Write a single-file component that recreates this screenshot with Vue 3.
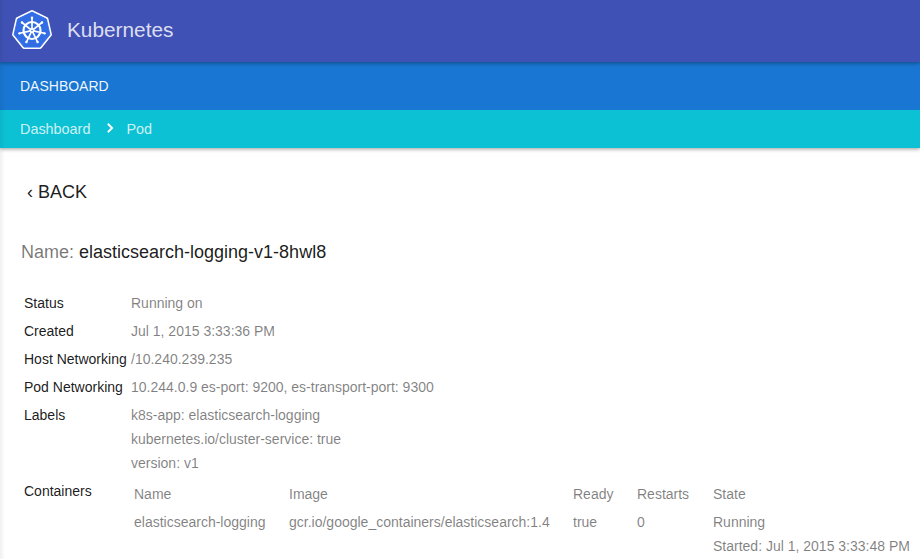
<script setup>
const point = (radius, step, count = 7) => {
  const a = (step / count) * Math.PI * 2 - Math.PI / 2
  return [radius * Math.cos(a), radius * Math.sin(a)].map((n) => +n.toFixed(2))
}
const heptagon = Array.from({ length: 7 }, (_, i) => point(18.4, i).join(',')).join(' ')
const spokes = Array.from({ length: 7 }, (_, i) => {
  const [x1, y1] = point(1.5, i)
  const [x2, y2] = point(13.6, i)
  const [cx, cy] = point(12.8, i)
  return { x1, y1, x2, y2, cx, cy }
})

const details = [
  { label: 'Status', lines: ['Running on'] },
  { label: 'Created', lines: ['Jul 1, 2015 3:33:36 PM'] },
  { label: 'Host Networking', lines: ['/10.240.239.235'] },
  { label: 'Pod Networking', lines: ['10.244.0.9 es-port: 9200, es-transport-port: 9300'] },
  {
    label: 'Labels',
    lines: ['k8s-app: elasticsearch-logging', 'kubernetes.io/cluster-service: true', 'version: v1'],
  },
]
const columns = ['Name', 'Image', 'Ready', 'Restarts', 'State']
const containers = [
  {
    name: 'elasticsearch-logging',
    image: 'gcr.io/google_containers/elasticsearch:1.4',
    ready: 'true',
    restarts: '0',
    state: ['Running', 'Started: Jul 1, 2015 3:33:48 PM'],
  },
]
</script>

<template>
  <div class="page">
    <header class="topbar">
      <svg class="logo" viewBox="-20 -20.5 40 41" width="40" height="41">
        <polygon class="shell" :points="heptagon" />
        <polygon class="face" :points="heptagon" />
        <circle class="rim" r="8.5" />
        <g v-for="(s, i) in spokes" :key="i">
          <line class="spoke" :x1="s.x1" :y1="s.y1" :x2="s.x2" :y2="s.y2" />
          <circle class="knob" :cx="s.cx" :cy="s.cy" r="1.2" />
        </g>
        <circle class="ring" r="2.4" />
        <circle class="hub" r="0.8" />
      </svg>
      <h1>Kubernetes</h1>
    </header>
    <nav class="tabs"><a>DASHBOARD</a></nav>
    <nav class="crumbs">
      <a>Dashboard</a>
      <svg class="chevron" width="8" height="12" viewBox="0 0 8 12"><path d="M1.8 1.8 L6.1 6 L1.8 10.2" /></svg>
      <a>Pod</a>
    </nav>
    <main>
      <a class="back">‹ BACK</a>
      <h2><span>Name:</span> elasticsearch-logging-v1-8hwl8</h2>
      <dl>
        <template v-for="d in details" :key="d.label">
          <dt>{{ d.label }}</dt>
          <dd><div v-for="line in d.lines" :key="line">{{ line }}</div></dd>
        </template>
        <dt>Containers</dt>
        <dd>
          <div class="containers">
            <span v-for="c in columns" :key="c">{{ c }}</span>
            <template v-for="c in containers" :key="c.name">
              <span>{{ c.name }}</span>
              <span>{{ c.image }}</span>
              <span>{{ c.ready }}</span>
              <span>{{ c.restarts }}</span>
              <span><div v-for="s in c.state" :key="s">{{ s }}</div></span>
            </template>
          </div>
        </dd>
      </dl>
    </main>
    <div class="edge"></div>
  </div>
</template>

<style>
body {
  margin: 0;
  overflow: hidden;
}
</style>

<style scoped>
.page {
  position: relative;
  display: flex;
  flex-direction: column;
  box-sizing: border-box;
  height: 559px;
  overflow: hidden;
  background: #fff;
  font: 14px/24px "Liberation Sans", Arial, sans-serif;
  color: rgba(0, 0, 0, 0.9);
}
.topbar {
  position: relative;
  z-index: 2;
  display: flex;
  align-items: center;
  flex: none;
  height: 62px;
  padding-left: 12px;
  box-sizing: border-box;
  background: #3f51b5;
  box-shadow: 0 1px 4px rgba(0, 0, 0, 0.4);
}
.logo {
  flex: none;
  margin-bottom: 1px;
}
.shell {
  fill: #fff;
  stroke: #fff;
  stroke-width: 4;
  stroke-linejoin: round;
}
.face {
  fill: #326de6;
  stroke: #326de6;
  stroke-width: 0.9;
  stroke-linejoin: round;
}
.rim {
  fill: none;
  stroke: #fff;
  stroke-width: 2.2;
}
.spoke {
  stroke: #fff;
  stroke-width: 1.7;
}
.knob {
  fill: #fff;
}
.ring {
  fill: #fff;
}
.hub {
  fill: #326de6;
}
h1 {
  margin: 0 0 2px 15px;
  font-size: 20.8px;
  font-weight: 400;
  color: rgba(255, 255, 255, 0.83);
}
.tabs {
  position: relative;
  z-index: 1;
  flex: none;
  height: 48px;
  padding-left: 20px;
  line-height: 48px;
  color: rgba(255, 255, 255, 0.95);
  background: #1976d2;
}
.crumbs {
  display: flex;
  align-items: center;
  flex: none;
  height: 38px;
  padding-left: 20px;
  font-size: 14.4px;
  color: rgba(255, 255, 255, 0.8);
  background: #0bc1d3;
  box-shadow: 0 1px 4px rgba(0, 0, 0, 0.4);
}
.chevron {
  margin: 0 12px 2px 16px;
}
.chevron path {
  fill: none;
  stroke: #fff;
  stroke-width: 1.9;
}
main {
  padding: 32px 0 0 21px;
}
.back {
  display: block;
  padding-left: 6px;
  font-size: 18px;
}
h2 {
  margin: 36px 0 27px;
  font-size: 18px;
  font-weight: 400;
}
h2 span {
  color: rgba(0, 0, 0, 0.54);
}
dl {
  display: grid;
  grid-template-columns: 103px max-content;
  gap: 4px;
  margin: 0;
  padding-left: 3px;
}
dt {
  white-space: nowrap;
}
dd {
  margin: 0;
  color: rgba(0, 0, 0, 0.5);
}
.containers {
  display: grid;
  grid-template-columns: 155px 284px 64px 76px max-content;
  row-gap: 4px;
  padding: 3px;
}
.edge {
  position: absolute;
  z-index: 3;
  top: 0;
  bottom: 0;
  left: 0;
  width: 5px;
  background: linear-gradient(to right, rgba(0, 0, 0, 0.06), rgba(0, 0, 0, 0));
}
</style>
